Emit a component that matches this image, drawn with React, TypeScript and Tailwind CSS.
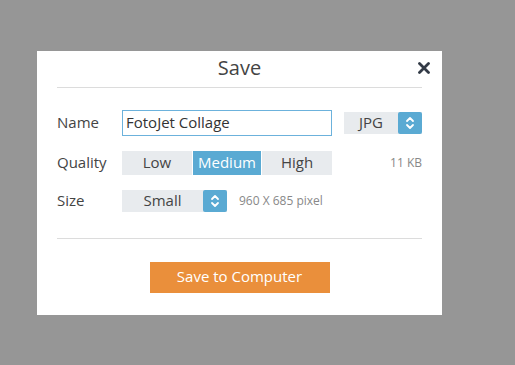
import React from 'react';

const font = { fontFamily: '"Open Sans", "Noto Sans", sans-serif' };

// small up/down chevrons used on the select boxes
const Updown = () => (
  <svg width="10" height="14" viewBox="0 0 10 14" fill="none" stroke="white" strokeWidth="1.8" strokeLinecap="round" strokeLinejoin="round">
    <path d="M2 5 L5 2 L8 5" />
    <path d="M2 9 L5 12 L8 9" />
  </svg>
);

const Select: React.FC<{ value: string; width: string }> = ({ value, width }) => (
  <div className={`flex h-[22px] ${width} bg-[#e8ebee]`}>
    <div className="flex flex-1 items-center justify-center pb-[2px] text-[15px] text-[#444]">{value}</div>
    <div className="flex w-[24px] items-center justify-center rounded-[2px] bg-[#5aaad3]">
      <Updown />
    </div>
  </div>
);

export default function App() {
  return (
    <div className="h-[365px] w-[515px] bg-[#969696] pl-[37px] pt-[51px]" style={font}>
      <div className="flex h-[264px] w-[405px] flex-col bg-white px-[20px]">
        {/* header */}
        <div className="relative flex h-[37px] items-center justify-center border-b border-[#dcdcdc] pb-[2px]">
          <span className="text-[20px] text-[#444]">Save</span>
          <button className="absolute right-[-8px] top-[11px]">
            <svg width="12" height="12" viewBox="0 0 12 12" stroke="#333b47" strokeWidth="2.8" strokeLinecap="round">
              <path d="M1.5 1.5 L10.5 10.5 M10.5 1.5 L1.5 10.5" />
            </svg>
          </button>
        </div>

        {/* name */}
        <div className="mt-[22px] flex h-[26px] items-center">
          <span className="w-[65px] pb-[2px] text-[15px] text-[#444]">Name</span>
          <div className="flex h-[26px] w-[210px] items-center border border-[#6cb2dc] px-[3px] pb-[2px] text-[15px] text-[#333]">
            FotoJet Collage
          </div>
          <div className="ml-auto">
            <Select value="JPG" width="w-[78px]" />
          </div>
        </div>

        {/* quality */}
        <div className="mt-[15px] flex h-[24px] items-center">
          <span className="w-[65px] pb-[2px] text-[15px] text-[#444]">Quality</span>
          <div className="flex h-[24px] gap-[1px]">
            <div className="flex w-[70px] items-center justify-center bg-[#e8ebee] pb-[2px] text-[15px] text-[#444]">Low</div>
            <div className="flex w-[68px] items-center justify-center bg-[#5aaad3] pb-[2px] text-[15px] text-white">Medium</div>
            <div className="flex w-[70px] items-center justify-center bg-[#e8ebee] pb-[2px] text-[15px] text-[#444]">High</div>
          </div>
          <span className="ml-auto text-[12px] text-[#888]">11 KB</span>
        </div>

        {/* size */}
        <div className="mt-[15px] flex h-[22px] items-center">
          <span className="w-[65px] pb-[2px] text-[15px] text-[#444]">Size</span>
          <Select value="Small" width="w-[105px]" />
          <span className="ml-[12px] text-[12px] text-[#888]">960 X 685 pixel</span>
        </div>

        <div className="mt-[26px] border-t border-[#dcdcdc]" />

        <div className="mt-[23px] flex justify-center">
          <button className="h-[31px] w-[180px] bg-[#ea8f3b] pb-[2px] text-[15px] text-white">Save to Computer</button>
        </div>
      </div>
    </div>
  );
}
